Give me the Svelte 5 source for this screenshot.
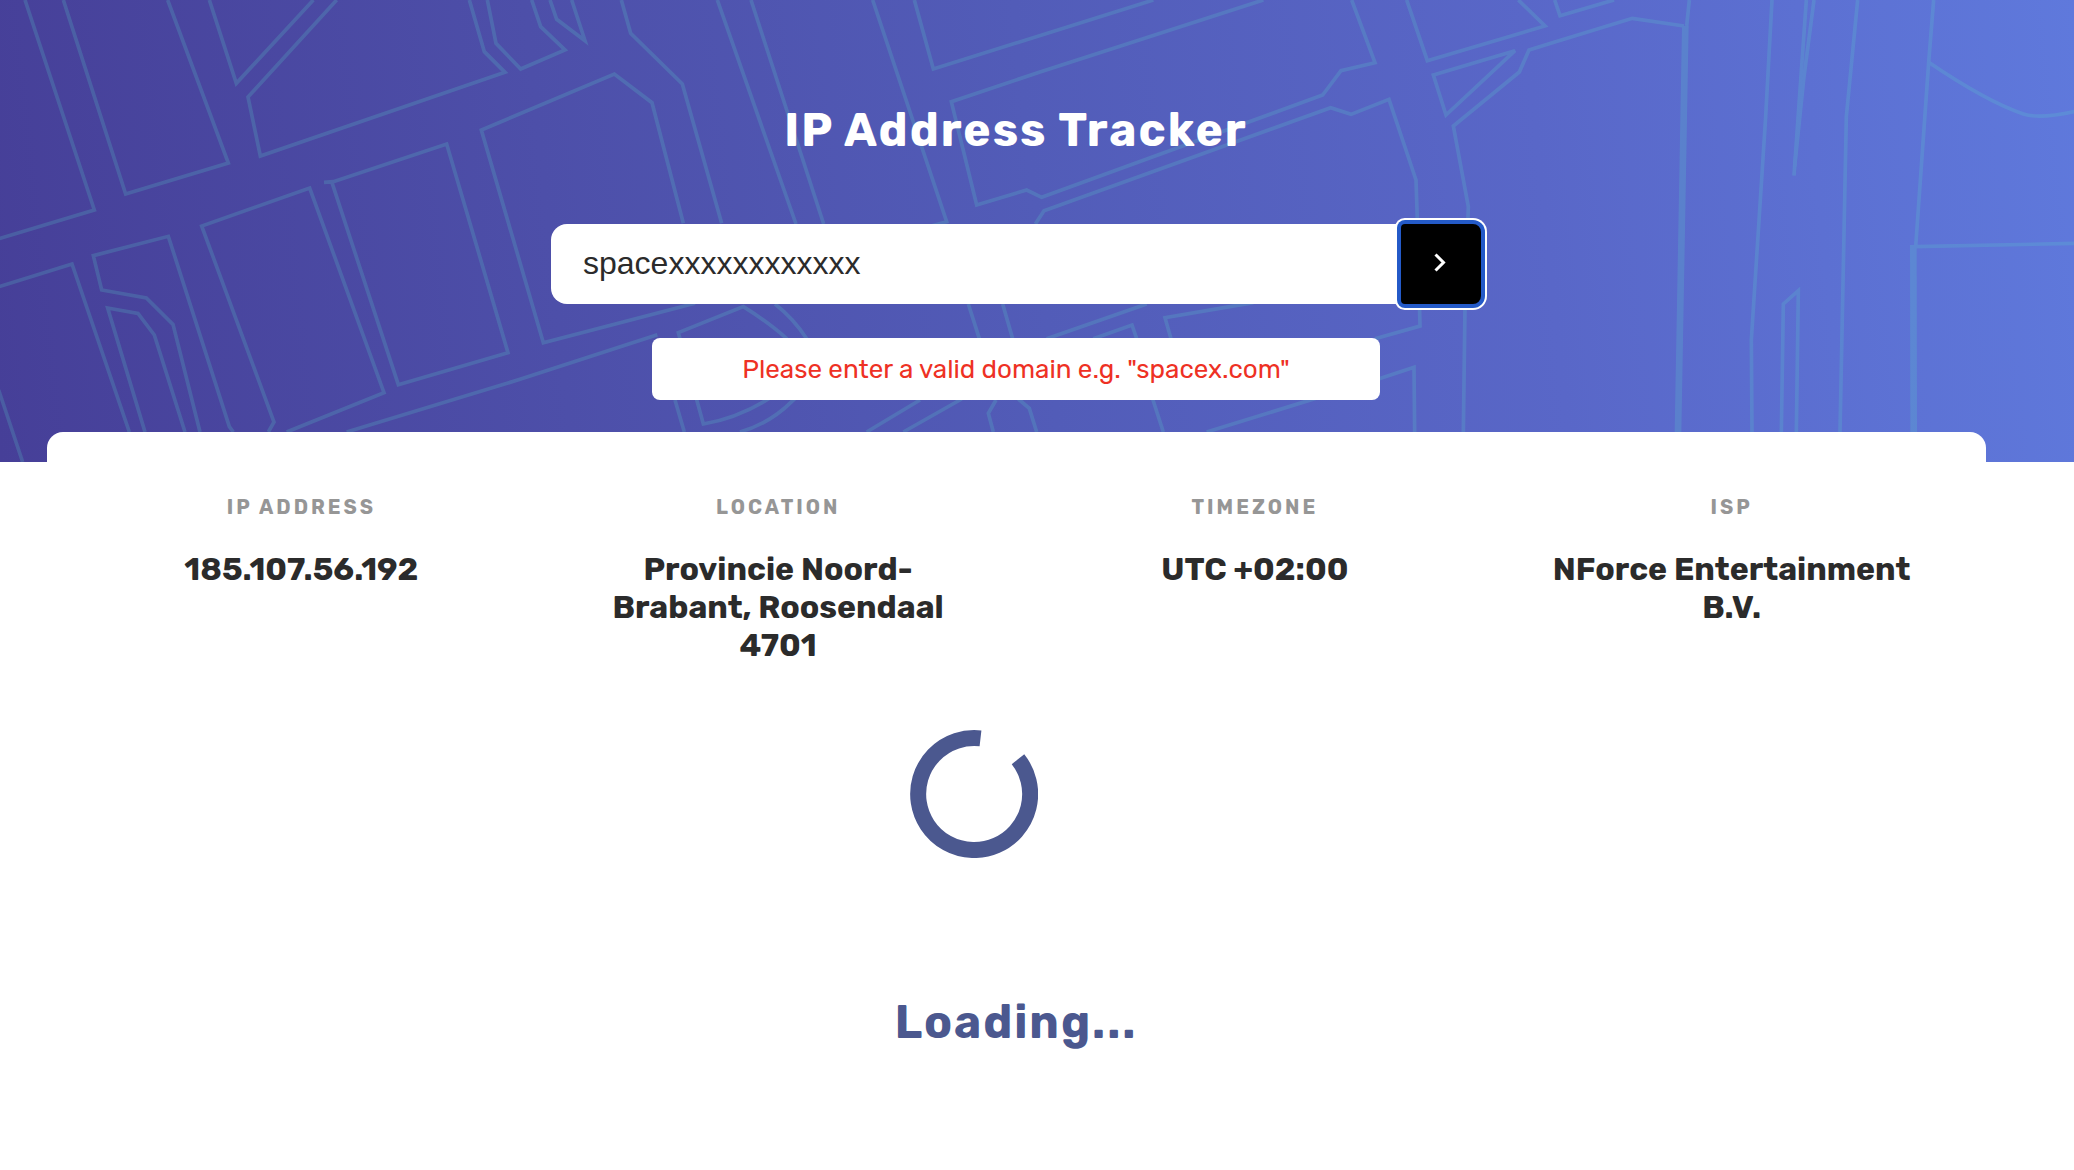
<script>
  let query = $state('spacexxxxxxxxxxxx');

  const details = [
    { label: 'IP Address', value: '185.107.56.192' },
    { label: 'Location', value: 'Provincie Noord-Brabant, Roosendaal 4701' },
    { label: 'Timezone', value: 'UTC +02:00' },
    { label: 'ISP', value: 'NForce Entertainment B.V.' }
  ];

  // Street outlines of the header pattern
  const streets = [
    'M75 0L283 630L-10 718',
    'M190 0L377 582L685 489L503 0',
    'M628 0L709 250L940 0',
    'M1010 0L744 291L781 468L1515 217L1453 155L1408 0',
    'M1462 0L1488 130L1562 207L1695 150L1622 80L1595 0',
    'M1650 0L1670 58L1755 122L1715 0',
    'M1864 0L1892 100L2047 252L2165 670',
    'M2085 910L1630 1028L1444 390L1843 222L1956 308L2050 670',
    'M1040 1296L1560 1138L1972 1004',
    'M860 1296L1152 1178L929 564L605 678L822 1266L805 1296',
    'M972 547L1000 545L1340 432L1524 1058L1195 1154L995 545',
    'M-10 862L216 792L388 1296',
    'M-4 1170L68 1386',
    'M600 1296L519 973L439 894L305 870L280 767L505 709L688 1280L700 1296',
    'M435 1296L323 924L414 940L463 1005L555 1296',
    'M2152 0L2388 672',
    'M2253 0L2471 672',
    'M2618 0L2840 665L2785 680',
    'M2743 0L2800 207L3460 0',
    'M3790 0L3120 216L2854 305L2930 615L3080 570L3125 592L3968 285L4023 212L4125 188L4055 0',
    'M3106 672L3132 632L3992 323L4053 343L4167 298L4248 540L4252 660L4260 978L4125 1016',
    'M4220 0L4282 182L4635 78L4555 0',
    'M4300 225L4545 152L4338 345Z',
    'M4390 1296L4395 920L4405 620L4360 378L4558 216L4587 150L4662 127L4897 55L5052 78',
    'M4664 0L4680 47L4842 0',
    'M5068 0L5060 78',
    'M5316 0L5297 350L5254 1020L5256 1296',
    'M5419 0L5382 527',
    'M5442 0L5412 230L5384 500',
    'M5573 0L5539 350L5532 700L5520 1296',
    'M5801 0L5786 187L5747 740L6230 730',
    'M5786 187Q5960 305 6070 342Q6120 358 6230 333',
    'M5344 1296L5350 912L5395 872L5389 1296',
    'M2035 998L2230 920Q2310 970 2360 1016Q2450 1110 2300 1200Q2210 1255 2110 1272Z',
    'M2325 912Q2380 955 2420 1016Q2490 1100 2375 1205Q2310 1270 2220 1296',
    'M2025 1200L2053 1296',
    'M2905 912L2938 1016M3008 912L3038 1016',
    'M2600 1296L2760 1200M2710 1296L2885 1197',
    'M2980 1296L2965 1240L2988 1200M3055 1197L3088 1225L3110 1296',
    'M3140 1016L3440 912',
    'M3280 1016L3396 975L3410 1016',
    'M3513 1016L3495 953L3760 908',
    'M3458 1197L3490 1296',
    'M3620 1296L4142 1135L4242 1102L4244 1296'
  ];
  const avenues = ['M5056 78L5034 1296', 'M5740 735L5741 1296'];
</script>

<div class="page">
  <header class="hero">
    <svg class="pattern" viewBox="0 0 6222 1386" preserveAspectRatio="xMidYMid slice" aria-hidden="true">
      <g opacity="0.2" fill="none" stroke="#5ad6cc">
        {#each streets as d}
          <path {d} stroke-width="11" />
        {/each}
        {#each avenues as d}
          <path {d} stroke-width="20" />
        {/each}
      </g>
    </svg>
    <h1>IP Address Tracker</h1>
    <form class="search" onsubmit={(event) => event.preventDefault()}>
      <input type="text" aria-label="IP address or domain" bind:value={query} />
      <button type="submit" aria-label="Search">
        <svg width="12" height="20" viewBox="0 0 12 20" aria-hidden="true">
          <path d="M1.5 1.5L9.5 9.5L1.5 17.5" fill="none" stroke="#fff" stroke-width="3" />
        </svg>
      </button>
    </form>
    <p class="error" role="alert">Please enter a valid domain e.g. "spacex.com"</p>
  </header>

  <main>
    <dl class="panel">
      {#each details as item}
        <div class="detail">
          <dt>{item.label}</dt>
          <dd>{item.value}</dd>
        </div>
      {/each}
    </dl>

    <section class="loading" aria-live="polite">
      <svg class="ring" width="128" height="128" viewBox="0 0 128 128" aria-hidden="true">
        <path d="M70.5 8.4A56 56 0 1 0 108 29.2" fill="none" stroke="#4b588f" stroke-width="16" />
      </svg>
      <h2>Loading...</h2>
    </section>
  </main>
</div>

<style>
  :global(body) {
    margin: 0;
    background: #fff;
  }

  .page {
    font-family: Rubik, Inter, 'Liberation Sans', sans-serif;
    color: #2b2b2b;
  }

  .hero {
    position: relative;
    display: flex;
    flex-direction: column;
    align-items: center;
    box-sizing: border-box;
    min-height: 462px;
    padding: 103px 42px 62px 0;
    background: linear-gradient(84deg, #463f98 0%, #4d4fa9 27%, #525cb8 50%, #5967c8 74%, #5f79dc 100%);
  }

  .pattern {
    position: absolute;
    inset: 0;
    width: 100%;
    height: 100%;
  }

  h1,
  .search,
  .error {
    position: relative;
  }

  h1,
  h2 {
    margin: 0;
    font-size: 46px;
    line-height: 56px;
    font-weight: 700;
    letter-spacing: 2px;
  }

  h1 {
    color: #fff;
  }

  .search {
    display: flex;
    width: 100%;
    max-width: 930px;
    height: 80px;
    margin-top: 65px;
  }

  input {
    flex: 1;
    min-width: 0;
    box-sizing: border-box;
    padding: 0 32px 2px;
    border: 0;
    border-radius: 16px 0 0 16px;
    background: #fff;
    color: #2b2b2b;
    font-family: 'Liberation Sans', sans-serif;
    font-size: 32px;
  }

  button {
    display: grid;
    place-items: center;
    width: 80px;
    padding: 0 2px 2px 0;
    border: 0;
    border-radius: 4px 8px 8px 4px;
    background: #000;
    box-shadow:
      0 0 0 4px #245ac8,
      0 0 0 6px #fff;
  }

  .error {
    box-sizing: border-box;
    width: 100%;
    max-width: 728px;
    margin: 34px 0 0;
    padding: 17px 16px 15px;
    border-radius: 8px;
    background: #fff;
    color: #ee3124;
    font-size: 26px;
    line-height: 30px;
    text-align: center;
  }

  .panel {
    position: relative;
    display: grid;
    grid-template-columns: repeat(4, 1fr);
    min-height: 298px;
    box-sizing: border-box;
    margin: -30px 88px 0 47px;
    padding: 60px 16px 0;
    border-radius: 16px;
    background: #fff;
  }

  .detail {
    padding: 0 48px;
    text-align: center;
  }

  dt {
    color: #969696;
    font-size: 20px;
    line-height: 30px;
    font-weight: 700;
    letter-spacing: 3px;
    text-transform: uppercase;
  }

  dd {
    margin: 0;
    padding-top: 28px;
    font-size: 32px;
    line-height: 38px;
    font-weight: 700;
  }

  .loading {
    display: flex;
    flex-direction: column;
    align-items: center;
    padding-right: 42px;
    color: #4b588f;
  }

  .ring {
    margin-right: 84px;
  }

  h2 {
    margin-top: 137px;
  }
</style>
